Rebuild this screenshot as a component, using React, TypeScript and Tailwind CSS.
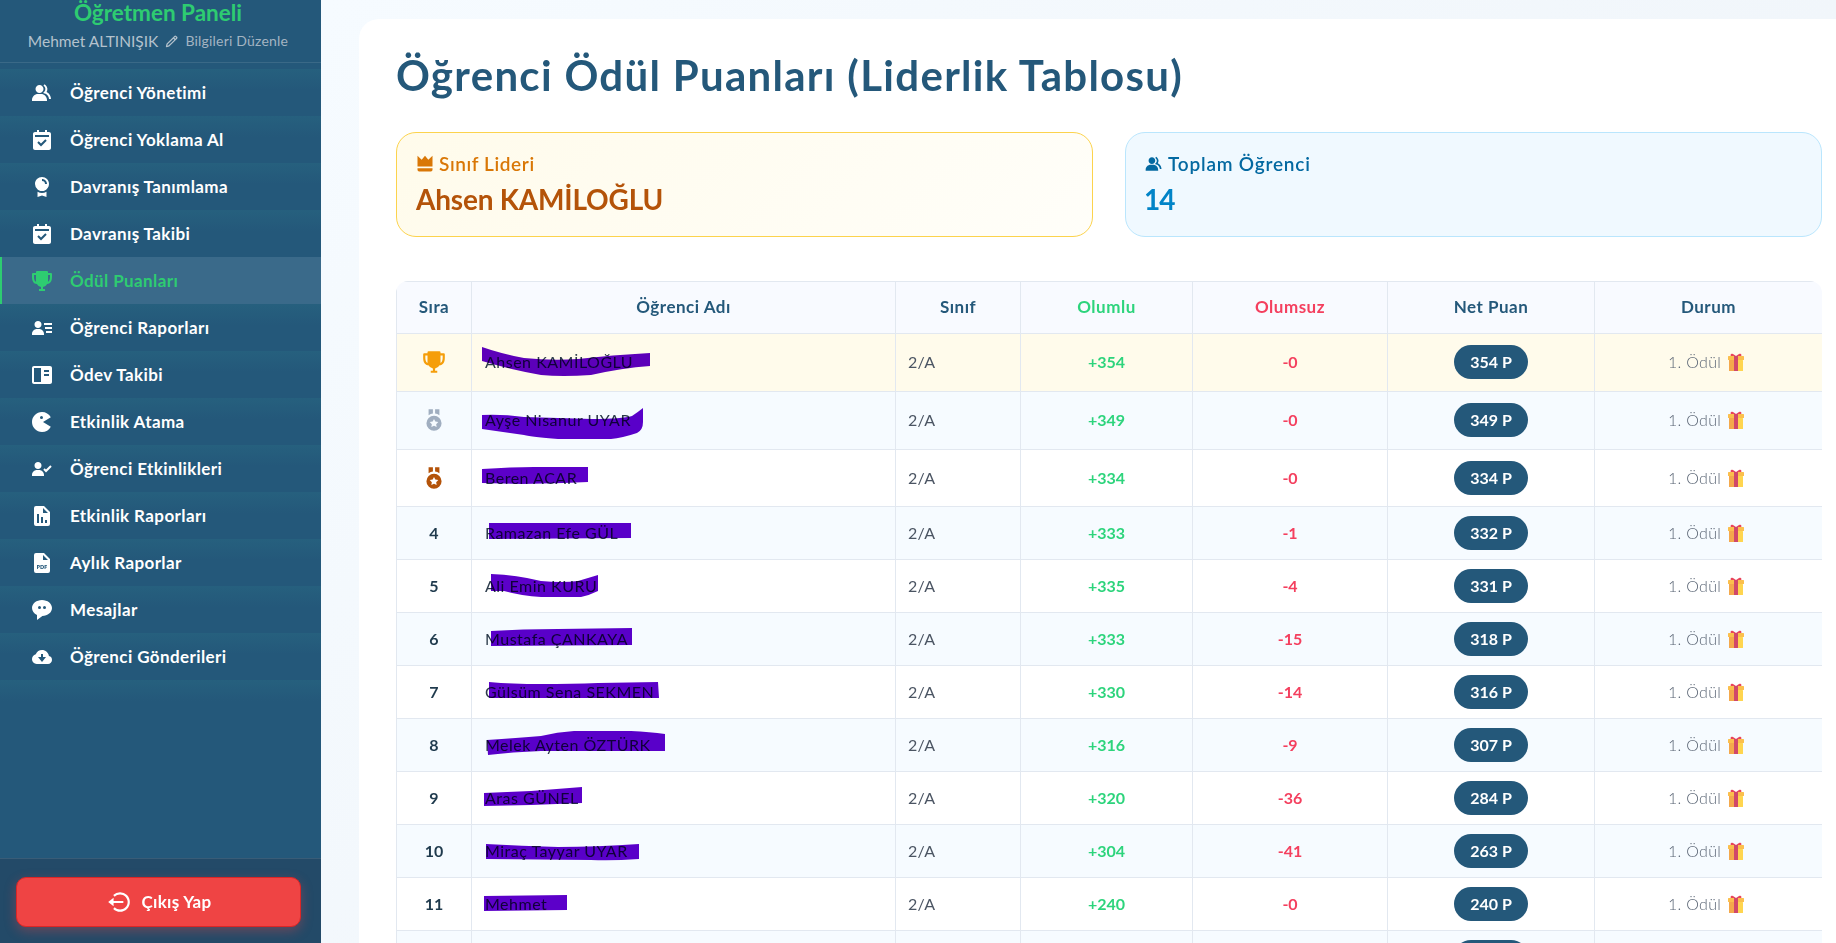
import type { ReactNode } from "react";
import {
  BiLogOutCircle,
  BiPencil,
  BiSolidAward,
  BiSolidBookContent,
  BiSolidCalendarCheck,
  BiSolidCloudDownload,
  BiSolidCrown,
  BiSolidFilePdf,
  BiSolidGame,
  BiSolidGroup,
  BiSolidMedal,
  BiSolidMessageRoundedDots,
  BiSolidReport,
  BiSolidTrophy,
  BiSolidUserCheck,
  BiSolidUserDetail,
} from "react-icons/bi";

const menu = [
  { label: "Öğrenci Yönetimi", icon: BiSolidGroup },
  { label: "Öğrenci Yoklama Al", icon: BiSolidCalendarCheck },
  { label: "Davranış Tanımlama", icon: BiSolidAward },
  { label: "Davranış Takibi", icon: BiSolidCalendarCheck },
  { label: "Ödül Puanları", icon: BiSolidTrophy, active: true },
  { label: "Öğrenci Raporları", icon: BiSolidUserDetail },
  { label: "Ödev Takibi", icon: BiSolidBookContent },
  { label: "Etkinlik Atama", icon: BiSolidGame },
  { label: "Öğrenci Etkinlikleri", icon: BiSolidUserCheck },
  { label: "Etkinlik Raporları", icon: BiSolidReport },
  { label: "Aylık Raporlar", icon: BiSolidFilePdf },
  { label: "Mesajlar", icon: BiSolidMessageRoundedDots },
  { label: "Öğrenci Gönderileri", icon: BiSolidCloudDownload },
];

// scribbles drawn over the names, coordinates are px inside the name cell
const students = [
  { name: "Ahsen KAMİLOĞLU", plus: 354, minus: 0, net: 354, mark: "M10 13Q30 20 52 24Q80 27 106 25Q140 21 178 19L178 32Q150 34 119 41Q90 43 69 41Q40 36 10 27Z" },
  { name: "Ayşe Nisanur UYAR", plus: 349, minus: 0, net: 349, mark: "M10 23Q30 22 52 25L120 27Q150 27 160 24Q166 20 171 16L171 30Q171 38 165 41Q150 46 139 47L86 47Q60 45 52 43L10 37Z" },
  { name: "Beren ACAR", plus: 334, minus: 0, net: 334, mark: "M10 19Q40 17 62 17L116 17L116 32L92 33L50 34L10 33Z" },
  { name: "Ramazan Efe GÜL", plus: 333, minus: 1, net: 332, mark: "M17 16L159 16L159 31L17 32Z" },
  { name: "Ali Emin KURU", plus: 335, minus: 4, net: 331, mark: "M19 14Q45 15 69 21Q90 23 106 21Q116 18 126 15L126 31Q118 35 109 37L69 37Q50 36 32 31L19 31Z" },
  { name: "Mustafa ÇANKAYA", plus: 333, minus: 15, net: 318, mark: "M19 18Q50 16 86 16L160 15L160 32L19 33Z" },
  { name: "Gülsüm Sena SEKMEN", plus: 330, minus: 14, net: 316, mark: "M17 16Q40 18 69 18Q100 18 126 17L186 16L187 32L17 32Z" },
  { name: "Melek Ayten ÖZTÜRK", plus: 316, minus: 9, net: 307, mark: "M15 21Q45 19 69 17Q85 13 102 12L159 12Q178 13 193 15L193 32L69 32Q40 33 16 36Z" },
  { name: "Aras GÜNEL", plus: 320, minus: 36, net: 284, mark: "M12 21Q35 20 59 19Q85 17 110 15L110 31Q85 32 59 33L12 34Z" },
  { name: "Miraç Tayyar UYAR", plus: 304, minus: 41, net: 263, mark: "M14 19Q50 21 86 22Q125 22 167 19L167 34Q140 36 119 35L14 34Z" },
  { name: "Mehmet", plus: 240, minus: 0, net: 240, mark: "M12 18L95 17L95 32L12 33Z" },
];

function Gift() {
  return (
    <svg viewBox="0 0 16 18" className="h-[18px] w-4 shrink-0">
      <path d="M3 4C2 1 3 0 5 1L8 3L11 1C13 0 14 1 13 4Z" fill="#e8455a" />
      <rect x="0" y="3" width="16" height="4" rx="0.5" fill="#fbbf4d" />
      <rect x="1" y="7" width="14" height="11" rx="0.5" fill="#ffd54f" />
      <rect x="1" y="7" width="5" height="11" fill="#f4a94c" />
      <rect x="6" y="3" width="4" height="15" fill="#d0486a" />
    </svg>
  );
}

function Rank({ index }: { index: number }): ReactNode {
  if (index === 0) return <BiSolidTrophy className="mx-auto text-[26px] text-[#f59e0b]" />;
  if (index === 1) return <BiSolidMedal className="mx-auto text-[26px] text-[#a0aec0]" />;
  if (index === 2) return <BiSolidMedal className="mx-auto text-[26px] text-[#b45309]" />;
  return <span>{index + 1}</span>;
}

function Sidebar() {
  return (
    <aside className="flex h-full w-[321px] shrink-0 flex-col bg-[#24587a]">
      <div className="h-[63px] border-b border-white/10 pr-[5px] text-center">
        <div className="text-[22.5px] leading-[26px] font-bold text-[#2ecc71]">Öğretmen Paneli</div>
        <div className="mt-[5px] flex items-center justify-center gap-[6px] leading-5 text-[#b4c2cd]">
          <span className="text-[15.5px]">Mehmet ALTINIŞIK</span>
          <BiPencil className="text-[15px]" />
          <span className="text-[14px] tracking-[0.2px] text-[#a3b4c2]">Bilgileri Düzenle</span>
        </div>
      </div>

      <nav className="mt-[6px] flex-1">
        {menu.map((item) => (
          <a
            key={item.label}
            className={
              item.active
                ? "flex h-[47px] items-center border-l-2 border-[#2ecc71] bg-[#3a6a8a] pl-[28px] text-[17px] font-bold tracking-[0.4px] text-[#2ecc71]"
                : "flex h-[47px] items-center bg-[linear-gradient(180deg,#26607e_0%,#24587a_45%)] pl-[30px] text-[17px] font-bold tracking-[0.4px] text-white"
            }
          >
            <item.icon className="shrink-0 text-[24px]" />
            <span className="ml-[16px]">{item.label}</span>
          </a>
        ))}
        <div className="h-[47px] bg-[linear-gradient(180deg,#26607e_0%,#24587a_45%)]" />
      </nav>

      <div className="h-[85px] border-t border-white/10 bg-[#234a68] px-4 pt-[18px]">
        <button className="flex h-[50px] w-[285px] items-center justify-center gap-[10px] rounded-[10px] border border-[#dc2626] bg-[#ef4444] text-[17px] font-bold tracking-[0.3px] text-white shadow-[0_4px_12px_rgba(239,68,68,0.35)]">
          <BiLogOutCircle className="text-[26px]" />
          Çıkış Yap
        </button>
      </div>
    </aside>
  );
}

function Leaderboard() {
  const th = "border border-[#e2e8f0] pb-[2px] text-[17px] font-bold tracking-[0.5px]";
  const td = "border border-[#e2e8f0] text-center";

  return (
    <div className="mt-[44px] w-[1426px] overflow-hidden rounded-t-xl">
      <table className="w-full table-fixed border-collapse text-[16px]">
        <colgroup>
          <col className="w-[75px]" />
          <col className="w-[424px]" />
          <col className="w-[125px]" />
          <col className="w-[172px]" />
          <col className="w-[195px]" />
          <col className="w-[207px]" />
          <col className="w-[228px]" />
        </colgroup>
        <thead>
          <tr className="h-[52px] bg-[#f8faff] text-[#24587a]">
            <th className={th}>Sıra</th>
            <th className={th}>Öğrenci Adı</th>
            <th className={th}>Sınıf</th>
            <th className={`${th} text-[#2dd47c]`}>Olumlu</th>
            <th className={`${th} text-[#f43f5e]`}>Olumsuz</th>
            <th className={th}>Net Puan</th>
            <th className={th}>Durum</th>
          </tr>
        </thead>
        <tbody>
          {students.map((s, i) => (
            <tr
              key={s.name}
              className={`${i < 2 ? "h-[58px] [&>td]:pb-[2px]" : i === 2 ? "h-[57px]" : "h-[53px]"} ${
                i === 0 ? "bg-[#fffbeb]" : i % 2 === 1 ? "bg-[#f6fbff]" : "bg-white"
              }`}
            >
              <td className={`${td} font-bold text-[#1f3a4d]`}>
                <Rank index={i} />
              </td>
              <td className="relative border border-[#e2e8f0] pl-[13px] tracking-[0.5px] text-[#2b3a4a]">
                {s.name}
                <svg className="pointer-events-none absolute inset-0 h-full w-full mix-blend-multiply">
                  <path d={s.mark} fill="#5c00c9" />
                </svg>
              </td>
              <td className="border border-[#e2e8f0] pl-[12px] tracking-[0.3px] text-[#4b5563]">2/A</td>
              <td className={`${td} font-bold text-[#2dd47c]`}>+{s.plus}</td>
              <td className={`${td} font-bold text-[#f43f5e]`}>-{s.minus}</td>
              <td className={td}>
                <span className="inline-flex h-[34px] items-center rounded-full bg-[#24587a] px-[16px] font-bold text-white">
                  {s.net} P
                </span>
              </td>
              <td className={`${td} pr-[5px]`}>
                <span className="inline-flex items-center gap-[7px] font-light tracking-[0.3px] text-[#5b6675]">
                  1. Ödül <Gift />
                </span>
              </td>
            </tr>
          ))}
          {/* next row is cut by the window, only the pill's top shows */}
          <tr className="h-[53px] bg-[#f6fbff]">
            <td className={td} />
            <td className={td} />
            <td className={td} />
            <td className={td} />
            <td className={td} />
            <td className={td}>
              <span className="inline-block h-[34px] w-[74px] rounded-full bg-[#24587a] align-middle" />
            </td>
            <td className={td} />
          </tr>
        </tbody>
      </table>
    </div>
  );
}

export default function App() {
  return (
    <div className="flex h-[943px] overflow-hidden font-['Lato',sans-serif]">
      <Sidebar />
      <main className="min-w-0 flex-1 bg-[linear-gradient(135deg,#f6fbff,#eef3f8)] pt-[19px] pl-[38px]">
        <div className="h-[1000px] w-[1500px] rounded-[20px] bg-white px-[37px] pt-[31px]">
          <h1 className="text-[42px] leading-[50px] font-bold tracking-[1.3px] text-[#24587a]">
            Öğrenci Ödül Puanları (Liderlik Tablosu)
          </h1>

          <div className="mt-[32px] grid w-[1426px] grid-cols-2 gap-8">
            <div className="h-[105px] rounded-[20px] border border-[#fcd34d] bg-[linear-gradient(135deg,#fffbeb,#fffef9)] px-5 pt-[17px]">
              <div className="flex items-center gap-[4px] text-[19px] font-semibold tracking-[0.6px] text-[#d97706]">
                <BiSolidCrown className="-ml-[2px] text-[20px]" />
                Sınıf Lideri
              </div>
              <div className="mt-[2px] -ml-[1px] text-[28px] leading-9 font-bold tracking-[-0.2px] text-[#b45309]">Ahsen KAMİLOĞLU</div>
            </div>
            <div className="h-[105px] rounded-[20px] border border-[#bae6fd] bg-[#f0f9ff] px-5 pt-[17px]">
              <div className="flex items-center gap-[4px] text-[19px] font-semibold tracking-[0.8px] text-[#0369a1]">
                <BiSolidGroup className="-ml-[2px] text-[20px]" />
                Toplam Öğrenci
              </div>
              <div className="mt-[2px] -ml-[2px] text-[28px] leading-9 font-bold tracking-[-1px] text-[#0284c7]">14</div>
            </div>
          </div>

          <Leaderboard />
        </div>
      </main>
    </div>
  );
}
